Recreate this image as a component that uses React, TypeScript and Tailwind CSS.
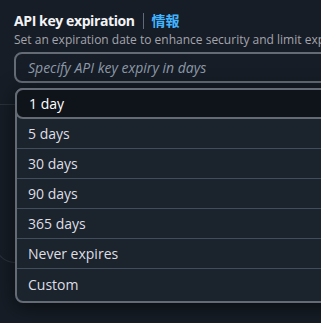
const options = ["1 day", "5 days", "30 days", "90 days", "365 days", "Never expires", "Custom"];

export default function App() {
  return (
    <div className="relative w-[321px] h-[323px] overflow-hidden bg-[#161d26] font-['Open_Sans','Noto_Sans_CJK_JP',sans-serif]">
      <div className="pl-[14px] pt-[11px]">
        <div className="flex items-center h-[20px]">
          <span className="text-[14px] font-bold leading-5 text-[#f3f3f7] tracking-[-0.4px]">API key expiration</span>
          <span className="mx-[8px] w-px h-[16px] bg-[#5f6b7a]" />
          <span className="text-[14px] font-bold leading-5 text-[#42b4ff]">情報</span>
        </div>
        <p className="mt-[1px] text-[12px] leading-[16px] whitespace-nowrap text-[#a4a4ad]">
          Set an expiration date to enhance security and limit exposure of your keys
        </p>
        <div className="mt-[4px] w-[400px] h-[31px] flex items-center pl-[12px] border-2 border-[#656b75] rounded-lg">
          <span className="text-[14px] italic text-[#8d99a8]">Specify API key expiry in days</span>
        </div>
      </div>

      {/* card behind the dropdown */}
      <div className="ml-[-5px] mt-[21px] w-[60px] h-[159px] border-t border-l border-b border-[#2a313b] rounded-bl-[20px]" />

      <div className="absolute left-[15px] top-[88px] w-[400px] bg-[#1b232d] border-2 border-[#656b75] rounded-lg shadow-[0_4px_20px_rgba(0,0,0,0.55)]">
        {options.map((o, i) =>
          i === 0 ? (
            <div
              key={o}
              className="-mx-[2px] -mt-[2px] h-[31px] flex items-center pl-[12px] border-2 border-[#656b75] rounded-lg bg-[#0f141a] text-[14px] text-white"
            >
              {o}
            </div>
          ) : (
            <div
              key={o}
              className={`flex items-center pl-[11px] text-[14px] text-[#dedee3] ${
                i < options.length - 1 ? "h-[30px] border-b border-[#414d5c]" : "h-[32px] pb-[2px]"
              }`}
            >
              {o}
            </div>
          )
        )}
      </div>
    </div>
  );
}
